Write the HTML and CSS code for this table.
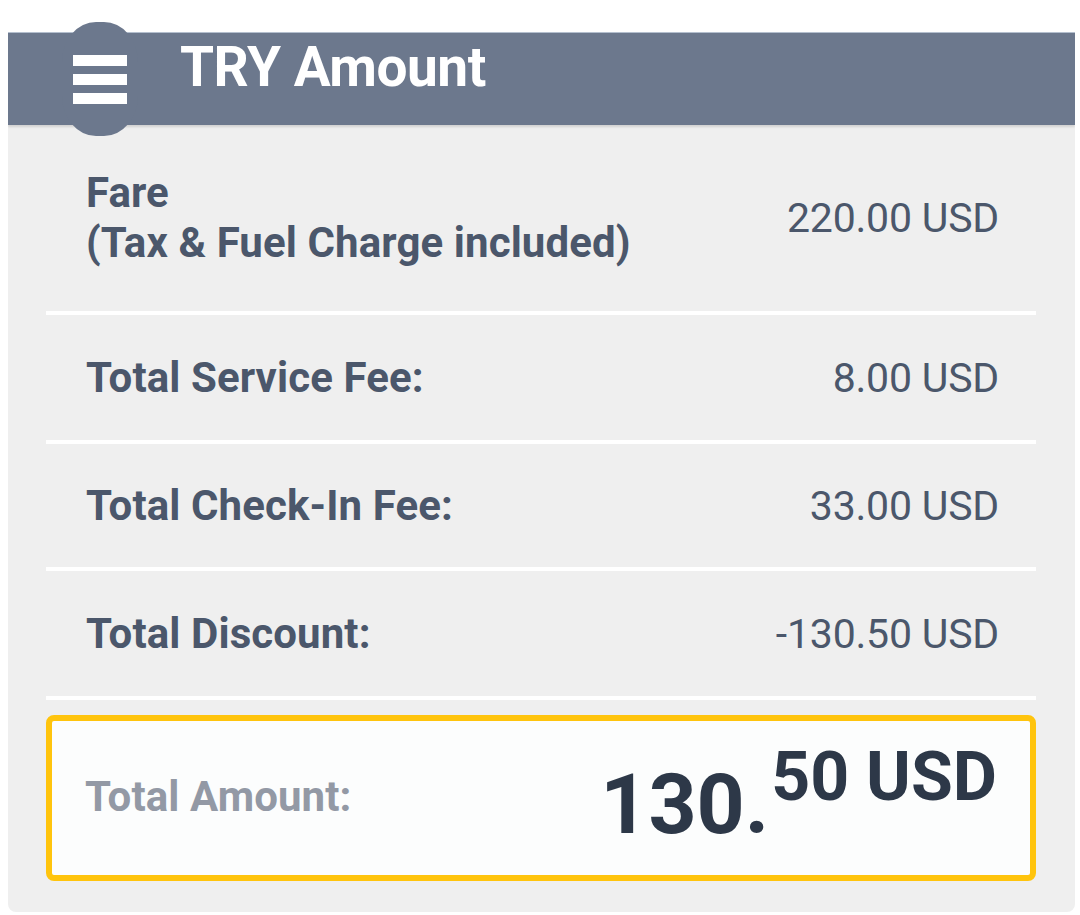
FILE: index.html
```html
<!DOCTYPE html>
<html lang="en">
<head>
	<meta charset="UTF-8">
	<title>TRY Amount</title>
	<link rel="stylesheet" href="styles.css">
</head>
<body>

<div class="panel">
	<div class="bar">
		<div class="menuBtn">
			<span></span>
			<span></span>
			<span></span>
		</div>
		<h1 class="title">TRY Amount</h1>
	</div>

	<div class="list">
		<div class="row first">
			<div class="label">Fare<br>(Tax &amp; Fuel Charge included)</div>
			<div class="value">220.00 USD</div>
		</div>
		<div class="row">
			<div class="label">Total Service Fee:</div>
			<div class="value">8.00 USD</div>
		</div>
		<div class="row short">
			<div class="label">Total Check-In Fee:</div>
			<div class="value">33.00 USD</div>
		</div>
		<div class="row">
			<div class="label">Total Discount:</div>
			<div class="value">-130.50 USD</div>
		</div>

		<div class="total">
			<div class="totalLabel">Total Amount:</div>
			<div class="amount">
				<span class="whole">130.</span>
				<span class="cents">50 USD</span>
			</div>
		</div>
	</div>
</div>

</body>
</html>
```

FILE: styles.css
```css
	body{
		margin: 8px 5px 8px 8px;
		background-color: #fff;
		font-family: Roboto, "Liberation Sans", sans-serif;
	}
	.panel{
		margin-top: 24px;
		background-color: #efefef;
		border-radius: 0 0 8px 8px;
		padding-bottom: 31px;
	}

	/* header bar */
	.bar{
		height: 92px;
		background-color: #6c788d;
		border-top: 1px solid #b4bfce;
		box-shadow: 0 2px 2px rgba(0,0,0,0.12);
		display: flex;
		align-items: center;
	}
	.menuBtn{
		position: relative;
		z-index: 1;
		width: 76px;
		height: 114px;
		margin-left: 54px;
		border-radius: 34px / 40px;
		background-color: #6c788d;
		display: flex;
		flex-direction: column;
		align-items: center;
		justify-content: center;
		gap: 8px;
	}
	.menuBtn span{
		display: block;
		width: 54px;
		height: 11px;
		background-color: #fff;
	}
	.title{
		margin: 0 0 24px 42px;
		color: #fff;
		font-size: 55px;
		font-weight: 700;
		letter-spacing: -0.5px;
	}

	/* rows */
	.list{
		padding: 0 39px 0 38px;
	}
	.row{
		height: 125px;
		padding: 0 37px 0 40px;
		border-bottom: 4px solid #fff;
		display: flex;
		align-items: center;
		justify-content: space-between;
		color: #4b576b;
		font-size: 41px;
	}
	.row.first{
		height: 186px;
	}
	.row.short{
		height: 123px;
	}
	.label{
		font-size: 42px;
		font-weight: 700;
		line-height: 50px;
		letter-spacing: 0.1px;
	}
	.value{
		font-weight: 400;
		letter-spacing: -0.2px;
	}

	/* total box */
	.total{
		margin-top: 15px;
		height: 154px;
		padding: 0 33px;
		border: 6px solid #ffc40d;
		border-radius: 8px;
		background-color: #fcfdfd;
		display: flex;
		align-items: center;
		justify-content: space-between;
	}
	.totalLabel{
		color: #9399a5;
		font-size: 42px;
		font-weight: 700;
		letter-spacing: 0.1px;
		margin-bottom: 4px;
	}
	.amount{
		display: flex;
		align-items: flex-start;
		color: #2d3848;
		font-weight: 700;
		line-height: 1;
		margin-bottom: 6px;
	}
	.whole{
		font-size: 84px;
		margin-top: 20px;
	}
	.cents{
		font-size: 68px;
		margin-left: 2px;
	}
```
